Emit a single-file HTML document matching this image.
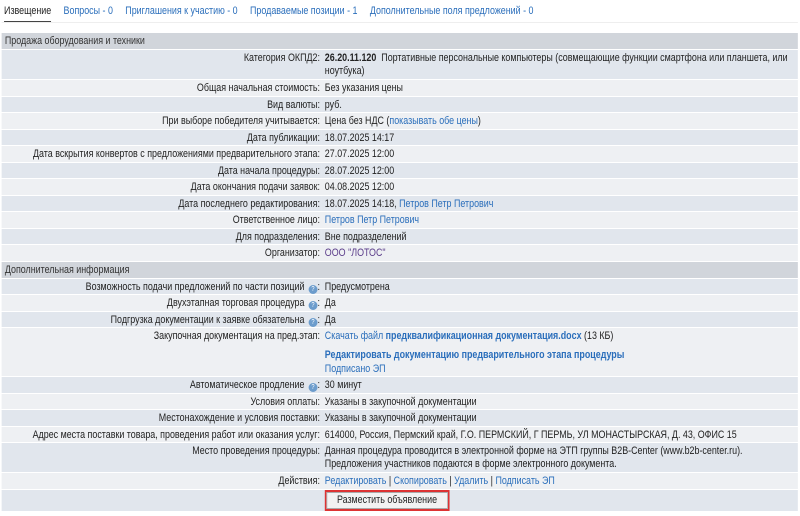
<!DOCTYPE html>
<html><head><meta charset="utf-8"><style>
body{margin:0;background:#fff;width:800px;height:516px;overflow:hidden}
#w{position:absolute;left:0;top:0;width:988px;height:516px;transform:scaleX(0.81);transform-origin:0 0;font-family:"Liberation Sans",Arial,sans-serif;font-size:11px;color:#222}
a{color:#2a6ebb;text-decoration:none}
.tabs{position:absolute;top:5px;left:5px;white-space:nowrap;font-size:11px}
.tabs .act{color:#222;border-bottom:2px solid #444;padding-bottom:4px}
.line{position:absolute;top:22px;left:2px;width:983px;height:1px;background:#eee}
table{position:absolute;top:32px;left:2px;width:983px;border-collapse:separate;border-spacing:0 1px}
td{padding:0 4px;height:15.5px;line-height:13px;vertical-align:top;padding-top:2px;box-sizing:border-box}
tr.h td{background:#d1d5db;color:#333;height:16px}
tr td{background:#eef0f3}
tr.o td{background:#e1e6ed}
td.l{text-align:right;width:395px;padding-right:2px}
.q{display:inline-block;width:11px;height:9px;border-radius:50%;background:#6c9ccc;vertical-align:-1px;margin-left:2px;color:#fff;font-size:7px;text-align:center;line-height:9px}
.btn{display:inline-block;border:2px solid #d33;padding:0;margin-top:0}
.btn span{display:block;border:1px solid #aaa;background:#f2f2f2;padding:1px 12px;font-size:11px}
</style></head><body><div id="w">
<div class="tabs"><span class="act">Извещение</span>&nbsp;&nbsp;&nbsp;&nbsp; <a>Вопросы - 0</a>&nbsp;&nbsp;&nbsp;&nbsp; <a>Приглашения к участию - 0</a>&nbsp;&nbsp;&nbsp;&nbsp; <a>Продаваемые позиции - 1</a>&nbsp;&nbsp;&nbsp;&nbsp; <a>Дополнительные поля предложений - 0</a></div>
<div class="line"></div>
<table>
<tr class="h"><td colspan="2">Продажа оборудования и техники</td></tr>
<tr class="o"><td class="l" style="height:29px">Категория ОКПД2:</td><td><b>26.20.11.120</b>&nbsp; Портативные персональные компьютеры (совмещающие функции смартфона или планшета, или ноутбука)</td></tr>
<tr><td class="l">Общая начальная стоимость:</td><td>Без указания цены</td></tr>
<tr class="o"><td class="l">Вид валюты:</td><td>руб.</td></tr>
<tr><td class="l">При выборе победителя учитывается:</td><td>Цена без НДС (<a>показывать обе цены</a>)</td></tr>
<tr class="o"><td class="l">Дата публикации:</td><td>18.07.2025 14:17</td></tr>
<tr><td class="l">Дата вскрытия конвертов с предложениями предварительного этапа:</td><td>27.07.2025 12:00</td></tr>
<tr class="o"><td class="l">Дата начала процедуры:</td><td>28.07.2025 12:00</td></tr>
<tr><td class="l">Дата окончания подачи заявок:</td><td>04.08.2025 12:00</td></tr>
<tr class="o"><td class="l">Дата последнего редактирования:</td><td>18.07.2025 14:18, <a>Петров Петр Петрович</a></td></tr>
<tr><td class="l">Ответственное лицо:</td><td><a>Петров Петр Петрович</a></td></tr>
<tr class="o"><td class="l">Для подразделения:</td><td>Вне подразделений</td></tr>
<tr><td class="l">Организатор:</td><td><a style="color:#5b3d8a">ООО "ЛОТОС"</a></td></tr>
<tr class="h"><td colspan="2">Дополнительная информация</td></tr>
<tr class="o"><td class="l">Возможность подачи предложений по части позиций <span class="q">?</span>:</td><td>Предусмотрена</td></tr>
<tr><td class="l">Двухэтапная торговая процедура <span class="q">?</span>:</td><td>Да</td></tr>
<tr class="o"><td class="l">Подгрузка документации к заявке обязательна <span class="q">?</span>:</td><td>Да</td></tr>
<tr><td class="l" style="height:47px">Закупочная документация на пред.этап:</td><td><a>Скачать файл <b>предквалификационная документация.docx</b></a> (13 КБ)<div style="margin-top:6px"><a><b>Редактировать документацию предварительного этапа процедуры</b></a></div><div style="margin-top:1px"><a>Подписано ЭП</a></div></td></tr>
<tr class="o"><td class="l">Автоматическое продление <span class="q">?</span>:</td><td>30 минут</td></tr>
<tr><td class="l">Условия оплаты:</td><td>Указаны в закупочной документации</td></tr>
<tr class="o"><td class="l">Местонахождение и условия поставки:</td><td>Указаны в закупочной документации</td></tr>
<tr><td class="l">Адрес места поставки товара, проведения работ или оказания услуг:</td><td>614000, Россия, Пермский край, Г.О. ПЕРМСКИЙ, Г ПЕРМЬ, УЛ МОНАСТЫРСКАЯ, Д. 43, ОФИС 15</td></tr>
<tr class="o"><td class="l" style="height:29px">Место проведения процедуры:</td><td>Данная процедура проводится в электронной форме на ЭТП группы B2B-Center (www.b2b-center.ru).<br>Предложения участников подаются в форме электронного документа.</td></tr>
<tr><td class="l">Действия:</td><td><a>Редактировать</a> | <a>Скопировать</a> | <a>Удалить</a> | <a>Подписать ЭП</a></td></tr>
<tr class="o"><td class="l" style="height:21px"></td><td style="padding-top:0"><span class="btn"><span>Разместить объявление</span></span></td></tr>
</table>
</div></body></html>
